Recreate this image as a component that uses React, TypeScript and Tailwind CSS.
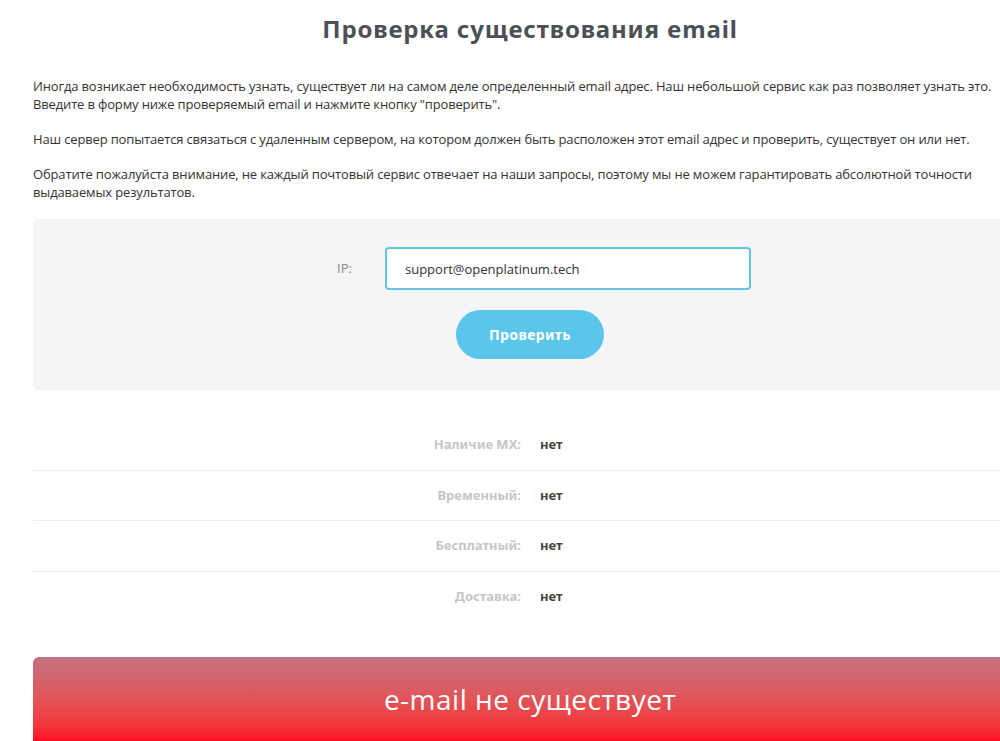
import { useState } from "react";

const rows = [
    { label: "Наличие MX:", value: "нет" },
    { label: "Временный:", value: "нет" },
    { label: "Бесплатный:", value: "нет" },
    { label: "Доставка:", value: "нет" },
];

export default function App() {
    const [email, setEmail] = useState("support@openplatinum.tech");

    return (
        <div className="w-full h-[741px] overflow-hidden bg-white">
            <div className="ml-[33px] w-[994px] font-['Open_Sans',sans-serif]">
                <h1 className="pt-[13px] h-[77px] text-center text-[24px] leading-[32px] font-bold tracking-[0.85px] text-[#4b5057] font-['Noto_Sans',sans-serif]">
                    Проверка существования email
                </h1>

                <div className="text-[13px] leading-[18px] tracking-[-0.15px] text-[#333] space-y-[17px]">
                    <p>
                        Иногда возникает необходимость узнать, существует ли на самом деле определенный email адрес. Наш небольшой сервис как раз позволяет узнать это.
                        <br />
                        Введите в форму ниже проверяемый email и нажмите кнопку "проверить".
                    </p>
                    <p>
                        Наш сервер попытается связаться с удаленным сервером, на котором должен быть расположен этот email адрес и проверить, существует он или нет.
                    </p>
                    <p>
                        Обратите пожалуйста внимание, не каждый почтовый сервис отвечает на наши запросы, поэтому мы не можем гарантировать абсолютной точности выдаваемых результатов.
                    </p>
                </div>

                {/* Form */}
                <div className="mt-[18px] h-[171px] rounded-md bg-[#f4f5f7] pt-[28px] flex flex-col">
                    <div className="flex items-center pl-[304px]">
                        <label className="w-[48px] text-[13px] text-[#888]">IP:</label>
                        <input
                            value={email}
                            onChange={(e) => setEmail(e.target.value)}
                            className="w-[366px] h-[43px] rounded border-2 border-[#66c3e6] bg-white px-[18px] text-[13px] text-[#333] outline-none"
                        />
                    </div>
                    <button className="mt-[20px] self-center w-[148px] h-[49px] rounded-full bg-[#5bc6ec] text-white text-[14px] font-bold tracking-[0.4px] font-['Noto_Sans',sans-serif]">
                        Проверить
                    </button>
                </div>

                {/* Results */}
                <div className="mt-[30px]">
                    {rows.map((r, i) => (
                        <div
                            key={r.label}
                            className={`flex items-center h-[50.5px] ${i < rows.length - 1 ? "border-b border-[#ececec]" : ""}`}
                        >
                            <div className="w-[488px] text-right text-[13px] font-bold text-[#c6c6c6] font-['Noto_Sans',sans-serif]">
                                {r.label}
                            </div>
                            <div className="ml-[19px] text-[13px] font-bold text-[#444] font-['Noto_Sans',sans-serif]">
                                {r.value}
                            </div>
                        </div>
                    ))}
                </div>

                {/* Result banner */}
                <div className="mt-[35px] h-[84px] rounded-t-md bg-gradient-to-b from-[#c2717e] to-[#fc0a22] flex items-center justify-center">
                    <span className="text-white text-[28px] tracking-[0.5px] font-['Open_Sans',sans-serif]">
                        e-mail не существует
                    </span>
                </div>
            </div>
        </div>
    );
}
